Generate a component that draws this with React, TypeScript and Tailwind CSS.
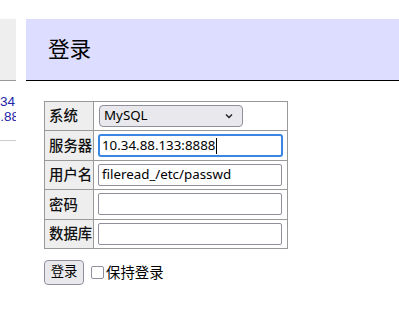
export default function App() {
    const rows = [
        { label: "系统", kind: "select" },
        { label: "服务器", kind: "focused", value: "10.34.88.133:8888" },
        { label: "用户名", kind: "input", value: "fileread_/etc/passwd" },
        { label: "密码", kind: "input", value: "" },
        { label: "数据库", kind: "input", value: "" },
    ];

    return (
        <div className="flex min-h-screen bg-white pt-[19px] text-black [font-family:'Noto_Sans','Noto_Sans_CJK_SC',sans-serif]">
            <aside className="w-[16px] shrink-0 overflow-hidden">
                <div className="h-[62px] border-b border-[#999] bg-[#eee]" />
                <div className="mt-[13px] text-[13.5px] leading-[15px] text-[#2424a8] [font-family:'Liberation_Sans',sans-serif]">
                    <div className="mr-[1px] flex justify-end whitespace-nowrap">10.34</div>
                    <div className="mr-[-3px] flex justify-end whitespace-nowrap">10.34.88</div>
                </div>
                <div className="mt-[16px] border-b border-[#ccc]" />
            </aside>

            <main className="ml-[10px] flex-1">
                <h2 className="flex h-[62px] items-center border-b border-black bg-[#ddf] pl-[22px] text-[21.6px] font-normal">
                    登录
                </h2>

                <div className="ml-[18px] mt-[20px]">
                    <table className="border-collapse">
                        <tbody>
                            {rows.map((r) => (
                                <tr key={r.label} className="h-[29.4px]">
                                    <th className="w-[49px] border border-[#999] bg-[#eee] pl-[4px] text-left text-[14.4px] font-medium text-[#111]">
                                        {r.label}
                                    </th>
                                    <td className="w-[194px] border border-[#999] px-[4px]">
                                        {r.kind === "select" && (
                                            <div className="ml-[1px] flex h-[22px] w-[144px] items-center justify-between rounded-[4px] border border-[#8f8f9d] bg-[#e9e9ed] pl-[4px] pr-[8px] text-[13.33px]">
                                                <span>MySQL</span>
                                                <svg width="10" height="10" viewBox="0 0 10 10">
                                                    <path d="M2 3.5 L5 6.5 L8 3.5" fill="none" stroke="#222" strokeWidth="1.4" />
                                                </svg>
                                            </div>
                                        )}
                                        {r.kind === "focused" && (
                                            <div className="flex h-[23px] w-[185px] items-center rounded-[3px] border-2 border-[#3b86e3] pl-[2px] text-[13.33px]">
                                                <span>{r.value}</span>
                                                <span className="ml-[1px] h-[16px] w-px bg-black" />
                                            </div>
                                        )}
                                        {r.kind === "input" && (
                                            <div className="flex h-[22px] w-[184px] items-center rounded-[2px] border border-[#8f8f9d] pl-[3px] text-[13.33px]">
                                                {r.value}
                                            </div>
                                        )}
                                    </td>
                                </tr>
                            ))}
                        </tbody>
                    </table>

                    <div className="mt-[11px] flex items-center">
                        <button className="h-[25px] w-[40px] rounded-[4px] border border-[#8f8f9d] bg-[#e9e9ed] text-[13.33px]">
                            登录
                        </button>
                        <span className="ml-[7px] h-[13px] w-[13px] rounded-[2px] border border-[#8f8f9d] bg-white" />
                        <span className="ml-[2px] text-[14.4px]">保持登录</span>
                    </div>
                </div>
            </main>
        </div>
    );
}
